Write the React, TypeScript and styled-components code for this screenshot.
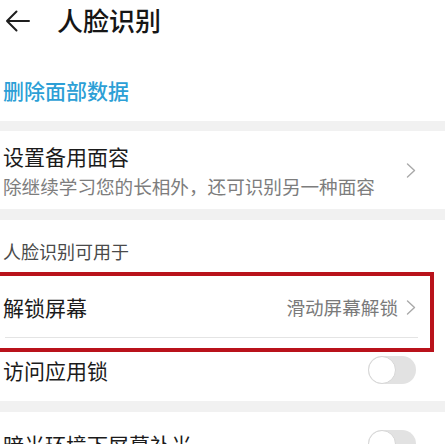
import { styled, createGlobalStyle } from "styled-components";

const GlobalStyle = createGlobalStyle`
  html, body {
    margin: 0;
    padding: 0;
    background: #ffffff;
  }
  body {
    font-family: "Noto Sans CJK SC", "Noto Sans", sans-serif;
    color: #1b1b1b;
    overflow: hidden;
  }
`;

const Page = styled.div`
  width: 445px;
  height: 444px;
  overflow: hidden;
  background: #fff;
`;

const Header = styled.div`
  height: 40px;
  display: flex;
  align-items: center;
  padding-left: 5px;
`;

const BackButton = styled.button`
  width: 26px;
  height: 22px;
  padding: 0;
  border: none;
  background: none;
  display: flex;
  align-items: center;
  margin-top: 2px;
`;

const Title = styled.h1`
  margin: 0 0 0 26px;
  font-size: 26px;
  line-height: 30px;
  font-weight: 500;
  color: #161616;
`;

const DeleteBlock = styled.div`
  height: 81px;
  box-sizing: border-box;
  display: flex;
  align-items: flex-end;
  padding: 0 0 17px 3px;
`;

const DeleteLink = styled.a`
  font-size: 21px;
  line-height: 28px;
  font-weight: 500;
  color: #2c9fd6;
  text-decoration: none;
`;

const Band = styled.div<{ h?: number }>`
  height: ${({ h }) => h ?? 11}px;
  background: #f1f1f1;
`;

const Row = styled.div<{ h: number; shift?: number }>`
  height: ${({ h }) => h}px;
  box-sizing: border-box;
  display: flex;
  align-items: center;
  padding: ${({ shift }) => shift ?? 0}px 29px 0 3px;
`;

const RowText = styled.div`
  flex: 1;
  display: flex;
  flex-direction: column;
`;

const RowTitle = styled.div`
  font-size: 21px;
  line-height: 26px;
  color: #1b1b1b;
  white-space: nowrap;
`;

const RowSub = styled.div`
  margin-top: 5px;
  font-size: 18.6px;
  line-height: 24px;
  color: #7d7d7d;
  white-space: nowrap;
`;

const RowValue = styled.span`
  font-size: 18.6px;
  line-height: 24px;
  color: #7a7a7a;
  margin-right: 8px;
`;

const SectionHeader = styled.div`
  height: 52px;
  box-sizing: border-box;
  padding: 19px 0 0 3px;
  font-size: 18px;
  line-height: 24px;
  color: #4a4a4a;
`;

const Highlight = styled.div`
  position: relative;

  &::after {
    content: "";
    position: absolute;
    top: 0;
    left: -10px;
    right: 11px;
    bottom: -14px;
    border: 4px solid #b9121b;
    pointer-events: none;
  }
`;

const Divider = styled.div`
  height: 1px;
  margin: 0 27px 0 5px;
  background: #e4e4e4;
`;

const Switch = styled.div`
  width: 48px;
  height: 28px;
  border-radius: 14px;
  background: #e2e2e2;
  position: relative;
  flex-shrink: 0;

  &::before {
    content: "";
    position: absolute;
    left: 0;
    top: 0;
    width: 28px;
    height: 28px;
    box-sizing: border-box;
    border-radius: 50%;
    background: #fff;
    border: 1.5px solid #d6d6d6;
  }
`;

const Chevron = () => (
  <svg width="10" height="15" viewBox="0 0 10 15" fill="none">
    <path d="M1.5 1 L8.5 7.5 L1.5 14" stroke="#a9a9a9" strokeWidth="1.4" strokeLinecap="round" strokeLinejoin="round" />
  </svg>
);

const BackArrow = () => (
  <svg width="26" height="22" viewBox="0 0 26 22" fill="none">
    <path d="M24 11 H2 M11.5 1.5 L2 11 L11.5 20.5" stroke="#1e1e1e" strokeWidth="2" strokeLinecap="round" strokeLinejoin="round" />
  </svg>
);

export default function App() {
  return (
    <Page>
      <GlobalStyle />
      <Header>
        <BackButton aria-label="返回">
          <BackArrow />
        </BackButton>
        <Title>人脸识别</Title>
      </Header>

      <DeleteBlock>
        <DeleteLink>删除面部数据</DeleteLink>
      </DeleteBlock>

      <Band h={10} />

      <Row h={78}>
        <RowText>
          <RowTitle>设置备用面容</RowTitle>
          <RowSub>除继续学习您的长相外，还可识别另一种面容</RowSub>
        </RowText>
        <Chevron />
      </Row>

      <Band />

      <SectionHeader>人脸识别可用于</SectionHeader>

      <Highlight>
        <Row h={65} shift={5}>
          <RowText>
            <RowTitle>解锁屏幕</RowTitle>
          </RowText>
          <RowValue>滑动屏幕解锁</RowValue>
          <Chevron />
        </Row>
        <Divider />
      </Highlight>

      <Row h={63}>
        <RowText>
          <RowTitle>访问应用锁</RowTitle>
        </RowText>
        <Switch />
      </Row>

      <Band />

      <Row h={52} shift={12}>
        <RowText>
          <RowTitle>暗光环境下屏幕补光</RowTitle>
        </RowText>
        <Switch />
      </Row>
    </Page>
  );
}
